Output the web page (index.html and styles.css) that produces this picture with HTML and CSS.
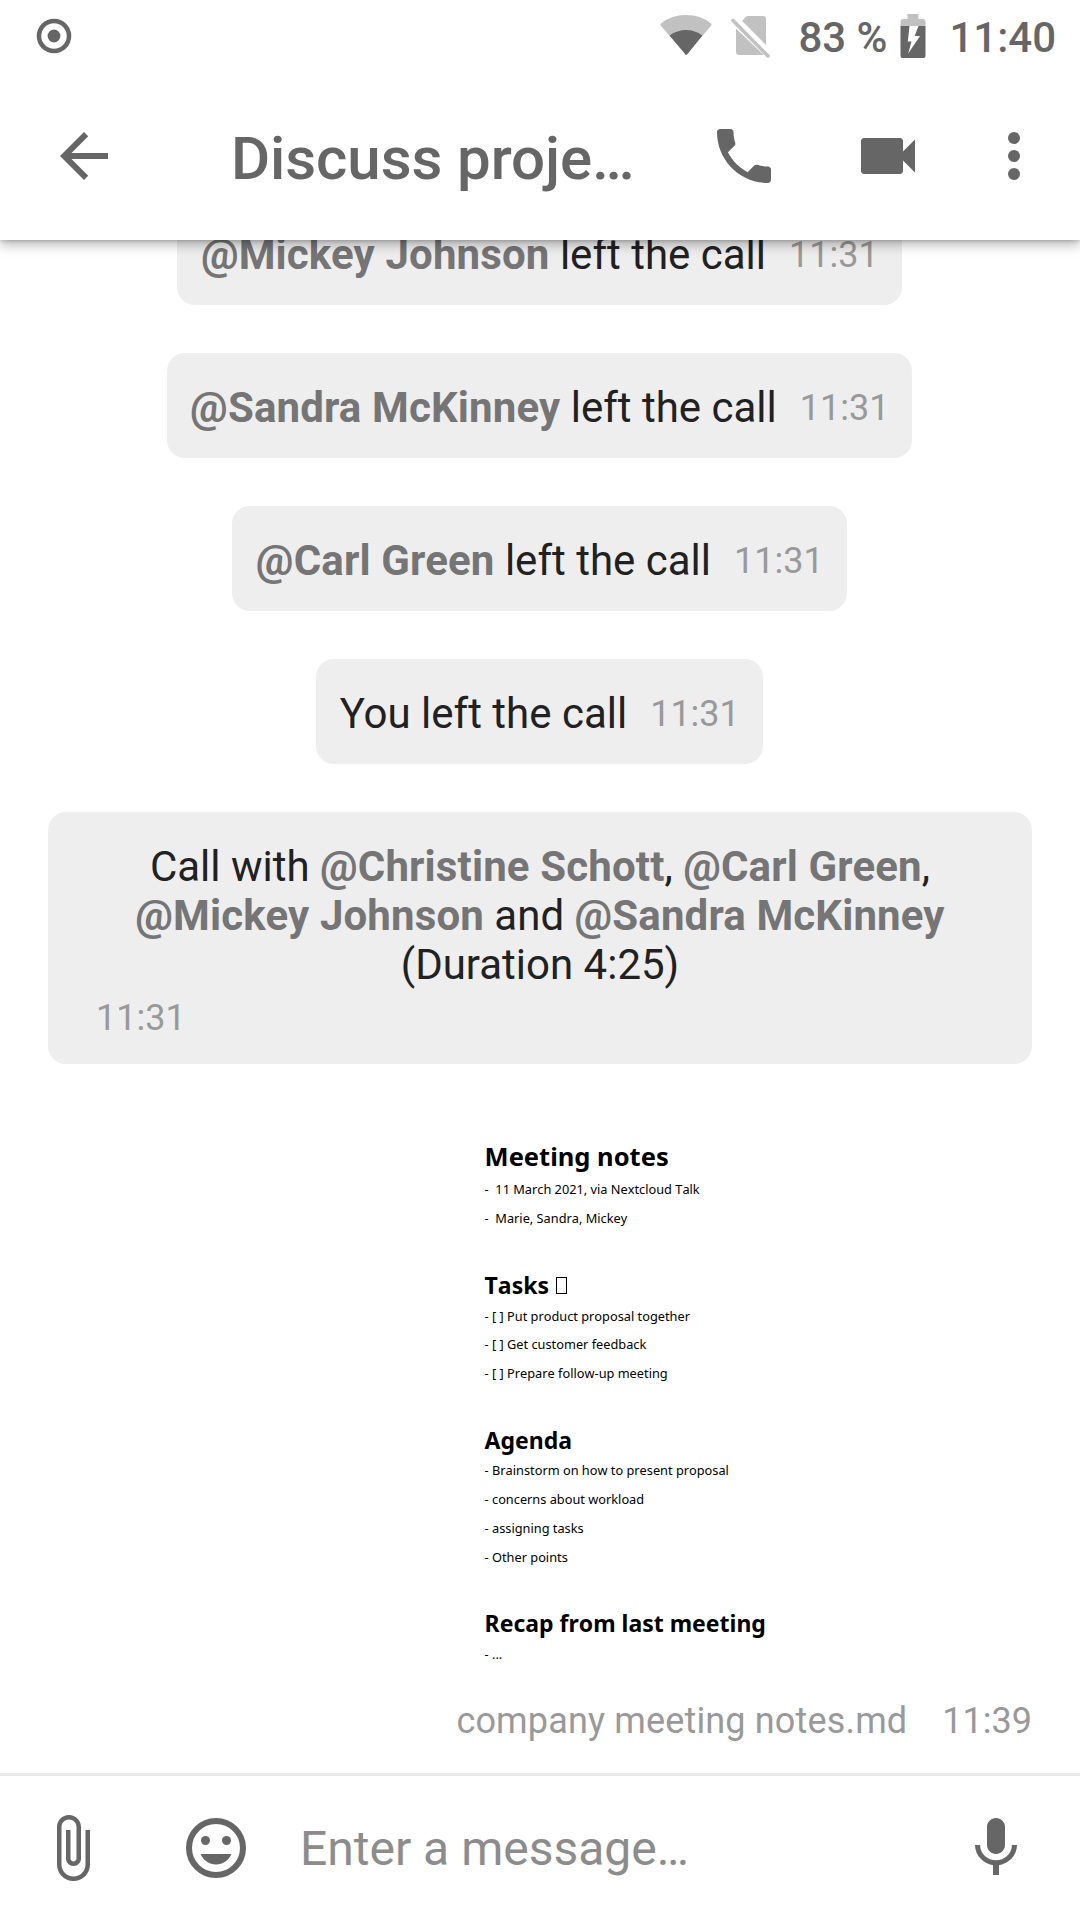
FILE: index.html
```html
<!DOCTYPE html>
<html lang="en">
<head>
<meta charset="utf-8">
<title>Discuss project</title>
<link rel="stylesheet" href="styles.css">
</head>
<body>
<div class="screen">
  <header class="header">
    <div class="status">
      <svg class="status-record" viewBox="0 0 36 36"><circle cx="18" cy="18" r="15" fill="none" stroke="currentColor" stroke-width="4.5"/><circle cx="18" cy="18" r="6.4" fill="currentColor"/></svg>
      <svg class="status-wifi" viewBox="0 0 52 42"><path class="faint" d="M26 41L.9 11.8Q-.2 10.4 1.3 9.200Q11.500 1 26 1T50.700 9.200Q52.200 10.400 51.100 11.800z"/><path d="M26 41L9.600 21.500Q17 16 26 16T42.400 21.500L27.500 40Q26 42 24.500 40z"/></svg>
      <svg class="status-sim" viewBox="0 0 40 44"><path class="faint" d="M11.200 7L14.500 3Q15.500 2 17 2H32Q35 2 35 5V31zM5 14.500L32.800 41H8Q5 41 5 38z"/><path class="slash" d="M2 6.500L37 42"/></svg>
      <span class="status-percent">83 %</span>
      <svg class="status-battery" viewBox="0 0 26 44"><path class="faint" d="M7.500 0H18.500V5H22.500Q25.500 5 25.500 8V12H.5V8Q.5 5 3.500 5H7.500z"/><path fill-rule="evenodd" d="M.5 12H25.500V42Q25.500 44 23.500 44H2.500Q.5 44 .5 42zM9.500 12L7.800 27.500H11.500L8.200 39.500L20 22H14.700L18.500 12z"/></svg>
      <span class="status-clock">11:40</span>
    </div>
    <div class="toolbar">
      <svg class="icon" viewBox="0 0 24 24"><path d="M20 11H7.830l5.590-5.590L12 4l-8 8 8 8 1.410-1.410L7.830 13H20v-2z"/></svg>
      <h1 class="title">Discuss proje…</h1>
      <svg class="icon" viewBox="0 0 24 24"><path d="M6.620 10.790c1.440 2.830 3.760 5.140 6.590 6.590l2.200-2.200c.27-.27.67-.36 1.020-.24 1.120.37 2.330.57 3.570.57.55 0 1 .45 1 1V20c0 .55-.45 1-1 1-9.390 0-17-7.610-17-17 0-.55.45-1 1-1h3.500c.55 0 1 .45 1 1 0 1.250.2 2.450.57 3.570.11.35.03.74-.25 1.020l-2.200 2.200z"/></svg>
      <svg class="icon" viewBox="0 0 24 24"><path d="M17 10.500V7c0-.55-.45-1-1-1H4c-.55 0-1 .45-1 1v10c0 .55.45 1 1 1h12c.55 0 1-.45 1-1v-3.500l4 4v-11l-4 4z"/></svg>
      <svg class="icon icon-more" viewBox="0 0 24 24"><circle cx="12" cy="6" r="2"/><circle cx="12" cy="12" r="2"/><circle cx="12" cy="18" r="2"/></svg>
    </div>
  </header>

  <main class="messages">
    <div class="bubble"><p class="text"><b>@Mickey Johnson</b> left the call</p><time class="time">11:31</time></div>
    <div class="bubble"><p class="text"><b>@Sandra McKinney</b> left the call</p><time class="time">11:31</time></div>
    <div class="bubble"><p class="text"><b>@Carl Green</b> left the call</p><time class="time">11:31</time></div>
    <div class="bubble"><p class="text">You left the call</p><time class="time">11:31</time></div>
    <div class="bubble bubble-wide"><p class="text">Call with <b>@Christine Schott</b>, <b>@Carl Green</b>, <b>@Mickey Johnson</b> and <b>@Sandra McKinney</b> (Duration 4:25)</p><time class="time">11:31</time></div>

    <article class="notes">
      <h2 class="notes-title">Meeting notes</h2>
      <p class="line">-  11 March 2021, via Nextcloud Talk</p>
      <p class="line">-  Marie, Sandra, Mickey</p>
      <h3 class="notes-heading">Tasks <span class="missing-glyph"></span></h3>
      <p class="line">- [ ] Put product proposal together</p>
      <p class="line">- [ ] Get customer feedback</p>
      <p class="line">- [ ] Prepare follow-up meeting</p>
      <h3 class="notes-heading">Agenda</h3>
      <p class="line">- Brainstorm on how to present proposal</p>
      <p class="line">- concerns about workload</p>
      <p class="line">- assigning tasks</p>
      <p class="line">- Other points</p>
      <h3 class="notes-heading">Recap from last meeting</h3>
      <p class="line">- ...</p>
    </article>
    <div class="caption"><span class="filename">company meeting notes.md</span><time>11:39</time></div>
  </main>

  <footer class="composer">
    <svg class="icon" viewBox="0 0 24 24"><path d="M16.500 6v11.500c0 2.210-1.790 4-4 4s-4-1.790-4-4V5c0-1.380 1.120-2.500 2.500-2.500s2.500 1.120 2.500 2.500v10.500c0 .55-.45 1-1 1s-1-.45-1-1V6H10v9.500c0 1.380 1.120 2.500 2.500 2.500s2.500-1.120 2.500-2.500V5c0-2.210-1.790-4-4-4S7 2.790 7 5v12.500c0 3.040 2.460 5.500 5.500 5.500s5.500-2.460 5.500-5.500V6h-1.500z"/></svg>
    <svg class="icon icon-smile" viewBox="0 0 24 24"><circle cx="12" cy="12" r="9" fill="none" stroke="currentColor" stroke-width="2"/><circle cx="8.500" cy="9.500" r="1.500"/><circle cx="15.500" cy="9.500" r="1.500"/><path d="M12 17.500c2.330 0 4.310-1.460 5.110-3.500H6.890c.8 2.040 2.780 3.500 5.110 3.500z"/></svg>
    <span class="placeholder">Enter a message…</span>
    <svg class="icon" viewBox="0 0 24 24"><path d="M12 14c1.660 0 2.990-1.340 2.990-3L15 5c0-1.660-1.340-3-3-3S9 3.340 9 5v6c0 1.660 1.340 3 3 3zm5.300-3c0 3-2.540 5.100-5.300 5.100S6.700 14 6.700 11H5c0 3.410 2.720 6.230 6 6.720V21h2v-3.280c3.280-.48 6-3.300 6-6.720h-1.700z"/></svg>
  </footer>
</div>
</body>
</html>
```
FILE: styles.css
```css
* { box-sizing: border-box; margin: 0; padding: 0; }

body {
  font-family: Roboto, sans-serif;
  background: #fff;
  color: #666;
}

svg { display: block; flex: none; fill: currentColor; }

.screen {
  width: 1080px;
  height: 1920px;
  display: flex;
  flex-direction: column;
  overflow: hidden;
}

.header {
  position: relative;
  z-index: 1;
  height: 240px;
  flex: none;
  background: #fff;
  box-shadow: 0 4px 12px rgba(0, 0, 0, .32), 0 1px 3px rgba(0, 0, 0, .16);
}

.status {
  display: flex;
  align-items: flex-start;
  height: 72px;
  padding: 14px 24px 0 36px;
  font-size: 42px;
  font-weight: 500;
  line-height: 48px;
  white-space: nowrap;
}
.status-record { width: 36px; height: 36px; margin-top: 4px; }
.status-wifi { width: 52px; height: 42px; margin-left: auto; }
.status-sim { width: 40px; height: 44px; margin: 0 27px 0 19px; }
.status-percent { width: 87px; margin-right: 15px; }
.status-battery { width: 26px; height: 44px; margin-right: 23px; }
.faint { fill: #c1c1c1; }
.slash { stroke: #c1c1c1; stroke-width: 3.500; stroke-linecap: round; }

.toolbar {
  display: flex;
  align-items: center;
  height: 168px;
  padding: 0 30px 0 48px;
}
.title {
  flex: 1;
  padding: 6px 0 0 111px;
  font-size: 60px;
  font-weight: 500;
  line-height: 70px;
  letter-spacing: -.08px;
  white-space: nowrap;
}
.icon { width: 72px; height: 72px; }
.toolbar .icon + .icon { margin-left: 72px; }
.toolbar .icon + .icon-more { margin-left: 54px; }

.messages {
  flex: 1;
  min-height: 0;
  display: flex;
  flex-direction: column;
  align-items: center;
  gap: 48px;
  margin-top: -40px;
}

.bubble {
  flex: none;
  display: flex;
  align-items: center;
  gap: 23px;
  height: 105px;
  margin-right: 1px;
  padding: 4px 23px 0 23.500px;
  border-radius: 18px;
  background: #eee;
}
.text { font-size: 42px; line-height: 49px; color: #212121; }
.text b { color: #757575; letter-spacing: .14px; }
.time { font-size: 36px; line-height: 42px; color: #999; }

.bubble-wide {
  flex-direction: column;
  align-items: flex-start;
  gap: 8px;
  width: 984px;
  height: 252px;
  margin-right: 0;
  padding: 30px 48px 0;
}
.bubble-wide .text { width: 100%; padding: 0 24px; text-align: center; }

.notes {
  align-self: flex-start;
  margin: 25.800px 0 0 484.600px;
  font-family: "Noto Sans", sans-serif;
  font-kerning: none;
  color: #000;
}
.notes-title { font-size: 25.500px; line-height: 36px; margin-bottom: 1.500px; }
.notes-heading { font-size: 23px; line-height: 33px; margin-top: 36px; margin-bottom: -.2px; }
.line { font-size: 12.770px; line-height: 28.700px; white-space: pre; }
.missing-glyph {
  display: inline-block;
  width: 11px;
  height: 17px;
  margin-left: 1px;
  border: 1px solid #000;
}

.caption {
  display: flex;
  align-self: flex-end;
  gap: 35px;
  margin: -16.500px 48px 0 0;
  font-size: 36px;
  line-height: 42px;
  color: #999;
}
.filename { letter-spacing: .16px; }

.composer {
  flex: none;
  display: flex;
  align-items: center;
  height: 147px;
  padding: 0 48px 0 36px;
  border-top: 3px solid #e8e8e8;
}
.icon-smile { margin-left: 72px; }
.placeholder { flex: 1; margin-left: 48px; padding-top: 2px; font-size: 48px; line-height: 56px; color: #8c8c8c; }
```
